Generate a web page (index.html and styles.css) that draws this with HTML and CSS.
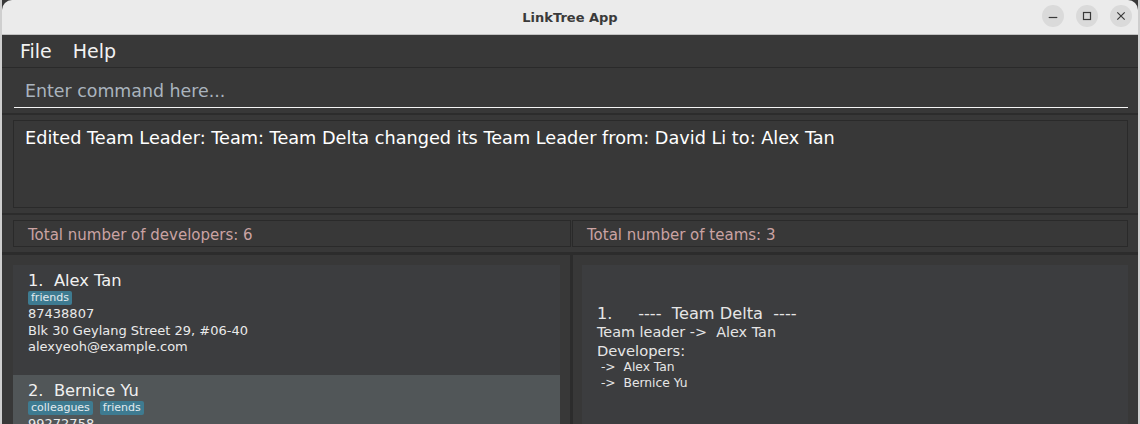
FILE: index.html
```html
<!DOCTYPE html>
<html>
<head>
<meta charset="utf-8">
<link rel="stylesheet" href="styles.css">
</head>
<body>
<div class="window">
  <div class="titlebar">
    <div class="title">LinkTree App</div>
    <div class="winbtns">
      <span class="winbtn"><svg width="22" height="22" viewBox="0 0 22 22"><line x1="6.7" y1="12.5" x2="15.3" y2="12.5" stroke="#3a3a3a" stroke-width="1.2"/></svg></span>
      <span class="winbtn"><svg width="22" height="22" viewBox="0 0 22 22"><rect x="7.5" y="7.5" width="7" height="7" fill="none" stroke="#3a3a3a" stroke-width="1.2"/></svg></span>
      <span class="winbtn"><svg width="22" height="22" viewBox="0 0 22 22"><path d="M7.3 7.3 L14.7 14.7 M14.7 7.3 L7.3 14.7" stroke="#3a3a3a" stroke-width="1.2"/></svg></span>
    </div>
  </div>
  <div class="app">
    <div class="menubar">
      <span class="menu">File</span>
      <span class="menu">Help</span>
    </div>
    <div class="commandpane">
      <div class="command">Enter command here...</div>
    </div>
    <div class="resultpane">
      <div class="result">Edited Team Leader: Team: Team Delta changed its Team Leader from: David Li to: Alex Tan</div>
    </div>
    <div class="statspane">
      <div class="stat">Total number of developers: 6</div>
      <div class="stat">Total number of teams: 3</div>
    </div>
    <div class="lists">
      <div class="listcol">
        <div class="card">
          <div class="name">1.&nbsp; Alex Tan</div>
          <div class="tags"><span class="tag">friends</span></div>
          <div class="line">87438807</div>
          <div class="line">Blk 30 Geylang Street 29, #06-40</div>
          <div class="line">alexyeoh@example.com</div>
        </div>
        <div class="card selected">
          <div class="name">2.&nbsp; Bernice Yu</div>
          <div class="tags"><span class="tag">colleagues</span><span class="tag">friends</span></div>
          <div class="line">99272758</div>
        </div>
      </div>
      <div class="listcol right">
        <div class="teamcard">
          <div class="teamtitle">1.&nbsp;&nbsp;&nbsp;&nbsp; ----&nbsp; Team Delta&nbsp; ----</div>
          <div class="leader">Team leader -&gt;&nbsp; Alex Tan</div>
          <div class="devs">Developers:</div>
          <div class="dev">&nbsp;-&gt;&nbsp; Alex Tan</div>
          <div class="dev">&nbsp;-&gt;&nbsp; Bernice Yu</div>
        </div>
      </div>
    </div>
  </div>
</div>
</body>
</html>
```

FILE: styles.css
```css
html, body {
  margin: 0;
  padding: 0;
  width: 1140px;
  height: 424px;
  overflow: hidden;
  background: #cfcfcf;
  font-family: "DejaVu Sans", sans-serif;
}
.window {
  margin: 0 2px;
  height: 424px;
  display: flex;
  flex-direction: column;
  background: #383838;
}
.titlebar {
  height: 35px;
  box-sizing: border-box;
  flex: none;
  background: #ebebeb;
  border-bottom: 1px solid #c2c2c2;
  border-radius: 10px 10px 0 0;
  display: flex;
  align-items: center;
  justify-content: center;
  position: relative;
}
.title {
  font-size: 13px;
  font-weight: bold;
  color: #3a3a3a;
  padding-top: 1px;
}
.winbtns {
  position: absolute;
  right: 6px;
  top: 5px;
  display: flex;
  gap: 12px;
}
.winbtn {
  width: 22px;
  height: 22px;
  border-radius: 50%;
  background: #dadada;
  display: block;
}
.winbtn svg { display: block; }
.app {
  flex: 1;
  display: flex;
  flex-direction: column;
  min-height: 0;
}
.menubar {
  flex: none;
  height: 33px;
  box-sizing: border-box;
  border-bottom: 1px solid #2a2a2a;
  display: flex;
  align-items: center;
  padding-left: 18px;
  gap: 21px;
}
.menu {
  font-size: 19px;
  color: #f2f2f2;
}
.commandpane {
  flex: none;
  height: 47px;
  box-sizing: border-box;
  padding: 0 10px 0 12px;
  border-bottom: 2px solid #2c2c2c;
}
.command {
  height: 40px;
  box-sizing: border-box;
  border-bottom: 1px solid #f4f4f4;
  font-size: 17.4px;
  line-height: 20px;
  color: #aab4be;
  padding: 13px 0 0 11px;
}
.resultpane {
  flex: none;
  height: 100px;
  box-sizing: border-box;
  padding: 5px 10px 5px 11px;
  border-bottom: 2px solid #2c2c2c;
}
.result {
  height: 88px;
  box-sizing: border-box;
  border: 1px solid #2a2a2a;
  padding: 7px 11px;
  font-size: 17.7px;
  line-height: 20px;
  color: #ffffff;
}
.statspane {
  flex: none;
  height: 40px;
  box-sizing: border-box;
  padding: 5px 10px 5px 11px;
  border-bottom: 3px solid #2c2c2c;
  display: grid;
  grid-template-columns: 558px 1fr;
  gap: 1px;
}
.stat {
  border: 1px solid #2a2a2a;
  font-size: 15px;
  color: #caa3a3;
  padding: 7px 14px 0;
  line-height: 14px;
}
.lists {
  flex: 1;
  display: grid;
  grid-template-columns: 571px 1fr;
  min-height: 0;
}
.listcol {
  padding: 10px 10px 0 11px;
  border-right: 3px solid #2c2c2c;
  overflow: hidden;
}
.listcol.right {
  border-right: none;
  padding: 10px 10px 0 9px;
}
.card {
  background: #3c3d3f;
  padding: 8px 14px 0 15px;
  height: 110px;
  box-sizing: border-box;
  color: #eaeaea;
}
.card.selected { background: #515658; }
.name {
  font-size: 16.3px;
  line-height: 16px;
  color: #f0f0f0;
  margin-bottom: 2px;
}
.tags {
  display: flex;
  gap: 7px;
  margin-bottom: 1px;
}
.tag {
  background: #3e7b91;
  color: #e3eaee;
  font-size: 11px;
  line-height: 14px;
  padding: 0 3px;
  border-radius: 2px;
}
.line {
  font-size: 13px;
  line-height: 16.5px;
}
.teamcard {
  background: #3c3d3f;
  height: 200px;
  padding: 40px 15px 0 15px;
  box-sizing: border-box;
  color: #e6e6e6;
}
.teamtitle { font-size: 16.2px; line-height: 18px; }
.leader { font-size: 14.4px; line-height: 18px; }
.devs { font-size: 14.7px; line-height: 17px; margin-top: 1px; }
.dev { font-size: 12.3px; line-height: 16px; }
```
